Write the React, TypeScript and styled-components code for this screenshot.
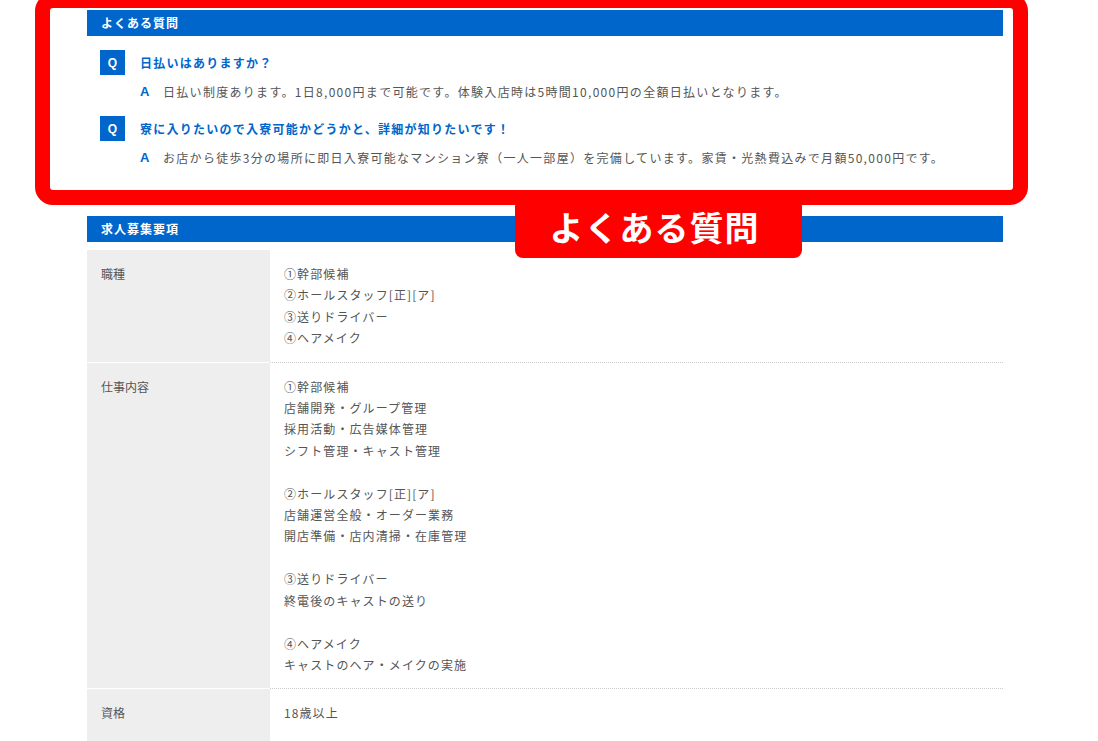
import React from 'react';
import styled, { createGlobalStyle } from 'styled-components';

const BLUE = '#0066cc';
const RED = '#ff0000';

const GlobalStyle = createGlobalStyle`
  html, body {
    margin: 0;
    padding: 0;
    background: #fff;
  }
  body {
    font-family: "Noto Sans CJK JP", "Noto Sans", sans-serif;
    color: #555;
    font-size: 12px;
  }
`;

const Stage = styled.div`
  position: relative;
  width: 1098px;
  height: 741px;
  overflow: hidden;
`;

const Page = styled.main`
  width: 916px;
  padding: 10px 0 0 87px;
`;

const Section = styled.section<{ $gap?: number }>`
  margin-bottom: ${(p) => p.$gap ?? 0}px;
`;

const Heading = styled.h2`
  margin: 0;
  height: 26px;
  line-height: 26px;
  padding-left: 14px;
  background: ${BLUE};
  color: #fff;
  font-size: 12px;
  font-weight: 700;
  letter-spacing: 1px;
`;

const FaqList = styled.dl`
  margin: 0;
  padding: 14px 0 0 13px;
`;

const FaqItem = styled.div`
  & + & {
    margin-top: 14px;
  }
`;

const Question = styled.dt`
  display: flex;
  align-items: center;
  gap: 15px;
  color: ${BLUE};
  font-weight: 700;
  letter-spacing: 1.25px;
`;

const Badge = styled.span`
  display: flex;
  align-items: center;
  justify-content: center;
  width: 25px;
  height: 25px;
  background: ${BLUE};
  color: #fff;
  font-family: "Liberation Sans", Arial, sans-serif;
  font-size: 12px;
  font-weight: 700;
  letter-spacing: 0;
`;

const Answer = styled.dd`
  display: flex;
  margin: 6px 0 0;
  padding-left: 40px;
  line-height: 21px;
  letter-spacing: 1.3px;
`;

const AnswerMark = styled.span`
  width: 23px;
  flex: none;
  color: ${BLUE};
  font-family: "Liberation Sans", Arial, sans-serif;
  font-size: 13px;
  font-weight: 700;
  letter-spacing: 0;
`;

const Table = styled.dl`
  display: grid;
  grid-template-columns: 183px 1fr;
  margin: 8px 0 0;
`;

const Label = styled.dt<{ $minHeight?: number }>`
  background: #eee;
  padding: 13px 14px;
  line-height: 21.4px;
  border-bottom: 1px solid #fff;
  min-height: ${(p) => p.$minHeight ?? 0}px;
`;

const Value = styled.dd`
  margin: 0;
  padding: 13px 14px;
  line-height: 21.4px;
  letter-spacing: 1.1px;
  border-bottom: 1px dotted #ccc;
  white-space: pre-line;
`;

const Frame = styled.div`
  position: absolute;
  left: 35px;
  top: -7px;
  width: 993px;
  height: 212px;
  box-sizing: border-box;
  border: 15px solid ${RED};
  border-radius: 18px;
  pointer-events: none;
`;

const Tag = styled.div`
  position: absolute;
  left: 515px;
  top: 204px;
  width: 287px;
  height: 54px;
  padding: 0 8px 9px 0;
  box-sizing: border-box;
  display: flex;
  align-items: center;
  justify-content: center;
  background: ${RED};
  border-radius: 2px 2px 8px 8px;
  color: #fff;
  font-size: 34px;
  font-weight: 700;
  letter-spacing: 1px;
`;

const faqs = [
  {
    q: '日払いはありますか？',
    a: '日払い制度あります。1日8,000円まで可能です。体験入店時は5時間10,000円の全額日払いとなります。',
  },
  {
    q: '寮に入りたいので入寮可能かどうかと、詳細が知りたいです！',
    a: 'お店から徒歩3分の場所に即日入寮可能なマンション寮（一人一部屋）を完備しています。家賃・光熱費込みで月額50,000円です。',
  },
];

const requirements = [
  {
    label: '職種',
    value: '①幹部候補\n②ホールスタッフ[正][ア]\n③送りドライバー\n④ヘアメイク',
  },
  {
    label: '仕事内容',
    value:
      '①幹部候補\n店舗開発・グループ管理\n採用活動・広告媒体管理\nシフト管理・キャスト管理\n\n②ホールスタッフ[正][ア]\n店舗運営全般・オーダー業務\n開店準備・店内清掃・在庫管理\n\n③送りドライバー\n終電後のキャストの送り\n\n④ヘアメイク\nキャストのヘア・メイクの実施',
  },
  {
    label: '資格',
    value: '18歳以上',
    minHeight: 70,
  },
];

const App = () => {
  return (
    <Stage>
      <GlobalStyle />
      <Page>
        <Section $gap={48}>
          <Heading>よくある質問</Heading>
          <FaqList>
            {faqs.map((item) => (
              <FaqItem key={item.q}>
                <Question>
                  <Badge>Q</Badge>
                  {item.q}
                </Question>
                <Answer>
                  <AnswerMark>A</AnswerMark>
                  {item.a}
                </Answer>
              </FaqItem>
            ))}
          </FaqList>
        </Section>
        <Section>
          <Heading>求人募集要項</Heading>
          <Table>
            {requirements.map((row) => (
              <React.Fragment key={row.label}>
                <Label $minHeight={row.minHeight}>{row.label}</Label>
                <Value>{row.value}</Value>
              </React.Fragment>
            ))}
          </Table>
        </Section>
      </Page>
      <Frame />
      <Tag>よくある質問</Tag>
    </Stage>
  );
};

export default App;
